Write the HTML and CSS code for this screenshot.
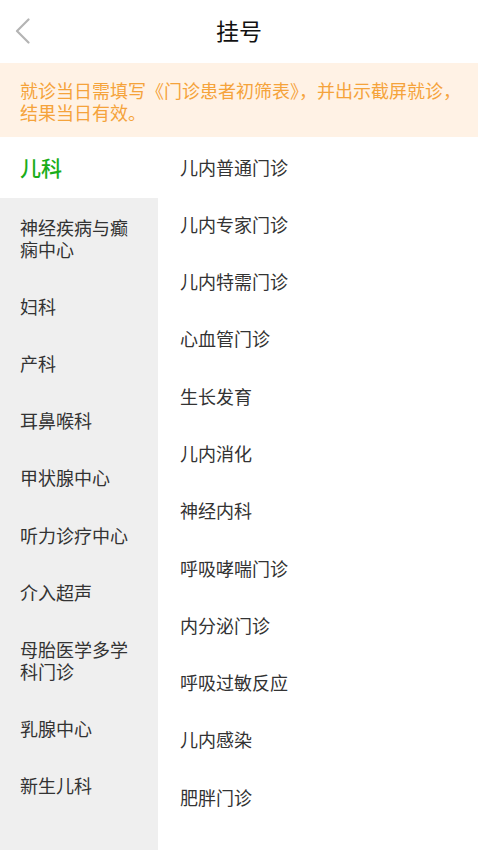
FILE: index.html
```html
<!DOCTYPE html>
<html lang="zh-CN">
<head>
<meta charset="utf-8">
<meta name="viewport" content="width=device-width, initial-scale=1">
<title>挂号</title>
<link rel="stylesheet" href="styles.css">
</head>
<body>
<div class="page">
  <header class="topbar">
    <div class="back">
      <svg width="16" height="26" viewBox="0 0 16 26" aria-hidden="true">
        <polyline points="13.5,1.5 2,13 13.5,24.5" fill="none" stroke="#b4b4b4" stroke-width="2.2" stroke-linecap="round" stroke-linejoin="round"/>
      </svg>
    </div>
    <h1 class="title">挂号</h1>
    <div class="spacer"></div>
  </header>
  <div class="notice">就诊当日需填写《门诊患者初筛表》，并出示截屏就诊，结果当日有效。</div>
  <div class="main">
    <ul class="side">
      <li class="side-item active">儿科</li>
      <li class="side-item">神经疾病与癫痫中心</li>
      <li class="side-item">妇科</li>
      <li class="side-item">产科</li>
      <li class="side-item">耳鼻喉科</li>
      <li class="side-item">甲状腺中心</li>
      <li class="side-item">听力诊疗中心</li>
      <li class="side-item">介入超声</li>
      <li class="side-item">母胎医学多学科门诊</li>
      <li class="side-item">乳腺中心</li>
      <li class="side-item">新生儿科</li>
    </ul>
    <ul class="list">
      <li class="list-item">儿内普通门诊</li>
      <li class="list-item">儿内专家门诊</li>
      <li class="list-item">儿内特需门诊</li>
      <li class="list-item">心血管门诊</li>
      <li class="list-item">生长发育</li>
      <li class="list-item">儿内消化</li>
      <li class="list-item">神经内科</li>
      <li class="list-item">呼吸哮喘门诊</li>
      <li class="list-item">内分泌门诊</li>
      <li class="list-item">呼吸过敏反应</li>
      <li class="list-item">儿内感染</li>
      <li class="list-item">肥胖门诊</li>
    </ul>
  </div>
</div>
</body>
</html>
```
FILE: styles.css
```css
* { box-sizing: border-box; }
html, body {
  margin: 0;
  padding: 0;
  height: 100%;
  background: #ffffff;
}
body {
  font-family: "Noto Sans CJK SC", "Noto Sans", sans-serif;
  color: #333333;
}
.page {
  height: 100vh;
  display: flex;
  flex-direction: column;
  overflow: hidden;
}
.topbar {
  height: 63px;
  flex: none;
  display: grid;
  grid-template-columns: 1fr auto 1fr;
  align-items: center;
  background: #ffffff;
}
.back {
  padding-left: 15px;
  display: flex;
  align-items: center;
  padding-bottom: 1px;
}
.back svg { display: block; }
.title {
  margin: 0;
  font-size: 23px;
  font-weight: normal;
  color: #111111;
  line-height: 30px;
  padding-bottom: 4px;
}
.notice {
  flex: none;
  height: 74px;
  background: #fff2e5;
  color: #f5a33b;
  font-size: 18px;
  line-height: 22px;
  padding: 16px 10px 0 20px;
}
.main {
  flex: 1;
  display: flex;
  min-height: 0;
}
.side {
  list-style: none;
  margin: 0;
  padding: 0;
  width: 158px;
  flex: none;
  background: #efefef;
}
.side-item {
  font-size: 18px;
  line-height: 22px;
  padding: 17.6px 20px 17.6px 20px;
  color: #333333;
}
.side-item.active {
  background: #ffffff;
  color: #1aad19;
  font-size: 21px;
  font-weight: 500;
  line-height: 25px;
  padding-top: 18px;
  padding-bottom: 18px;
}
.list {
  list-style: none;
  margin: 0;
  padding: 0;
  flex: 1;
}
.list-item {
  font-size: 18px;
  line-height: 22px;
  padding: 18.6px 20px 16.7px 22px;
  color: #333333;
}
```
